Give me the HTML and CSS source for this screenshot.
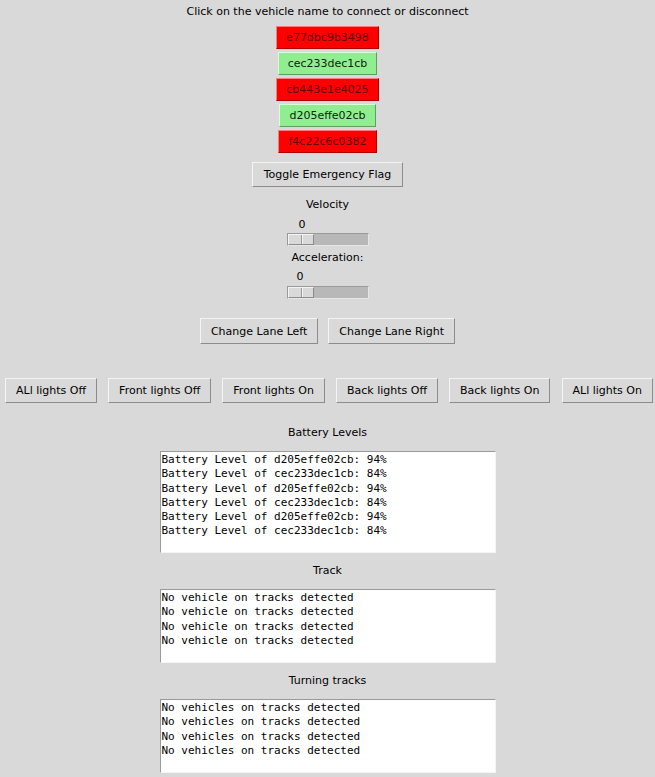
FILE: index.html
```html
<!DOCTYPE html>
<html>
<head>
<meta charset="utf-8">
<link rel="stylesheet" href="styles.css">
</head>
<body>
<div class="app">
  <div class="title">Click on the vehicle name to connect or disconnect</div>
  <div class="vehicles">
    <button class="btn veh red">e77dbc9b3498</button>
    <button class="btn veh green">cec233dec1cb</button>
    <button class="btn veh red">cb443e1e4025</button>
    <button class="btn veh green">d205effe02cb</button>
    <button class="btn veh red">f4c22c6c0382</button>
  </div>
  <button class="btn toggle">Toggle Emergency Flag</button>
  <div class="lbl vel">Velocity</div>
  <div class="scale">
    <div class="val v1">0</div>
    <div class="trough"><div class="thumb"></div></div>
  </div>
  <div class="lbl acc">Acceleration:</div>
  <div class="scale">
    <div class="val v2">0</div>
    <div class="trough"><div class="thumb"></div></div>
  </div>
  <div class="lanes">
    <button class="btn lane">Change Lane Left</button>
    <button class="btn lane">Change Lane Right</button>
  </div>
  <div class="lights">
    <button class="btn light">ALl lights Off</button>
    <button class="btn light">Front lights Off</button>
    <button class="btn light">Front lights On</button>
    <button class="btn light">Back lights Off</button>
    <button class="btn light">Back lights On</button>
    <button class="btn light">ALl lights On</button>
  </div>
  <div class="lbl sec1">Battery Levels</div>
  <div class="box battery">Battery Level of d205effe02cb: 94%
Battery Level of cec233dec1cb: 84%
Battery Level of d205effe02cb: 94%
Battery Level of cec233dec1cb: 84%
Battery Level of d205effe02cb: 94%
Battery Level of cec233dec1cb: 84%</div>
  <div class="lbl sec">Track</div>
  <div class="box small">No vehicle on tracks detected
No vehicle on tracks detected
No vehicle on tracks detected
No vehicle on tracks detected</div>
  <div class="lbl sec">Turning tracks</div>
  <div class="box small">No vehicles on tracks detected
No vehicles on tracks detected
No vehicles on tracks detected
No vehicles on tracks detected</div>
</div>
</body>
</html>
```

FILE: styles.css
```css
html, body {
  margin: 0;
  padding: 0;
  background: #d9d9d9;
}
body {
  width: 655px;
  height: 777px;
  overflow: hidden;
  font-family: "DejaVu Sans", sans-serif;
  font-size: 11px;
  color: #000;
}
.app {
  display: flex;
  flex-direction: column;
  align-items: center;
}
.title {
  height: 16px;
  line-height: 16px;
  margin-top: 4px;
}
.btn {
  font-family: "DejaVu Sans", sans-serif;
  font-size: 11px;
  color: #000;
  background: #d9d9d9;
  border: 1px solid;
  border-color: #f4f4f4 #8c8c8c #8c8c8c #f4f4f4;
  padding: 0 10px;
  margin: 0;
  height: 25px;
  line-height: 23px;
  white-space: nowrap;
  cursor: pointer;
}
.vehicles {
  display: flex;
  flex-direction: column;
  align-items: center;
  gap: 3px;
  margin-top: 6px;
}
.veh {
  height: 23px;
  line-height: 21px;
  padding: 0 9px;
}
.red {
  background: #ff0000;
  color: #600000;
  border-color: #ff7a7a #b00000 #b00000 #ff7a7a;
}
.green {
  background: #90ee90;
  color: #0d1f0d;
  border-color: #d8ffd8 #5e9e5e #5e9e5e #d8ffd8;
}
.toggle {
  margin-top: 9px;
  padding: 0 11px;
}
.lbl {
  height: 16px;
  line-height: 16px;
}
.vel {
  margin-top: 10px;
}
.acc {
  margin-top: 4px;
}
.scale {
  width: 82px;
  position: relative;
  padding-top: 20px;
}
.val {
  position: absolute;
  line-height: 16px;
}
.v1 { left: 12px; top: 4px; }
.v2 { left: 10px; top: 3px; }
.trough {
  height: 13px;
  background: #b8b8b8;
  border: 1px solid;
  border-color: #9a9a9a #e6e6e6 #e6e6e6 #9a9a9a;
  box-sizing: border-box;
  position: relative;
}
.thumb {
  width: 26px;
  height: 11px;
  box-sizing: border-box;
  background: linear-gradient(to right, transparent 12px, #9a9a9a 12px, #9a9a9a 13px, #f4f4f4 13px, #f4f4f4 14px, transparent 14px), #d9d9d9;
  border: 1px solid;
  border-color: #f4f4f4 #8c8c8c #8c8c8c #f4f4f4;
}
.lanes {
  display: flex;
  gap: 10px;
  margin-top: 19px;
  height: 26px;
}
.lane {
  height: 26px;
  padding: 0 10px;
}
.lights {
  align-self: stretch;
  display: flex;
  justify-content: space-between;
  padding: 0 2px 0 5px;
  margin-top: 34px;
}
.light {
  height: 25px;
  padding: 0 10px;
}
.sec1 {
  margin-top: 22px;
}
.sec {
  margin-top: 10px;
}
.box {
  width: 336px;
  box-sizing: border-box;
  margin-top: 10px;
  background: #fff;
  border: 1px solid;
  border-color: #9a9a9a #f4f4f4 #f4f4f4 #9a9a9a;
  font-family: "DejaVu Sans Mono", monospace;
  font-size: 11px;
  line-height: 14.3px;
  white-space: pre;
  padding: 1px 0 0 1px;
}
.battery {
  height: 102px;
}
.small {
  height: 74px;
}
```
